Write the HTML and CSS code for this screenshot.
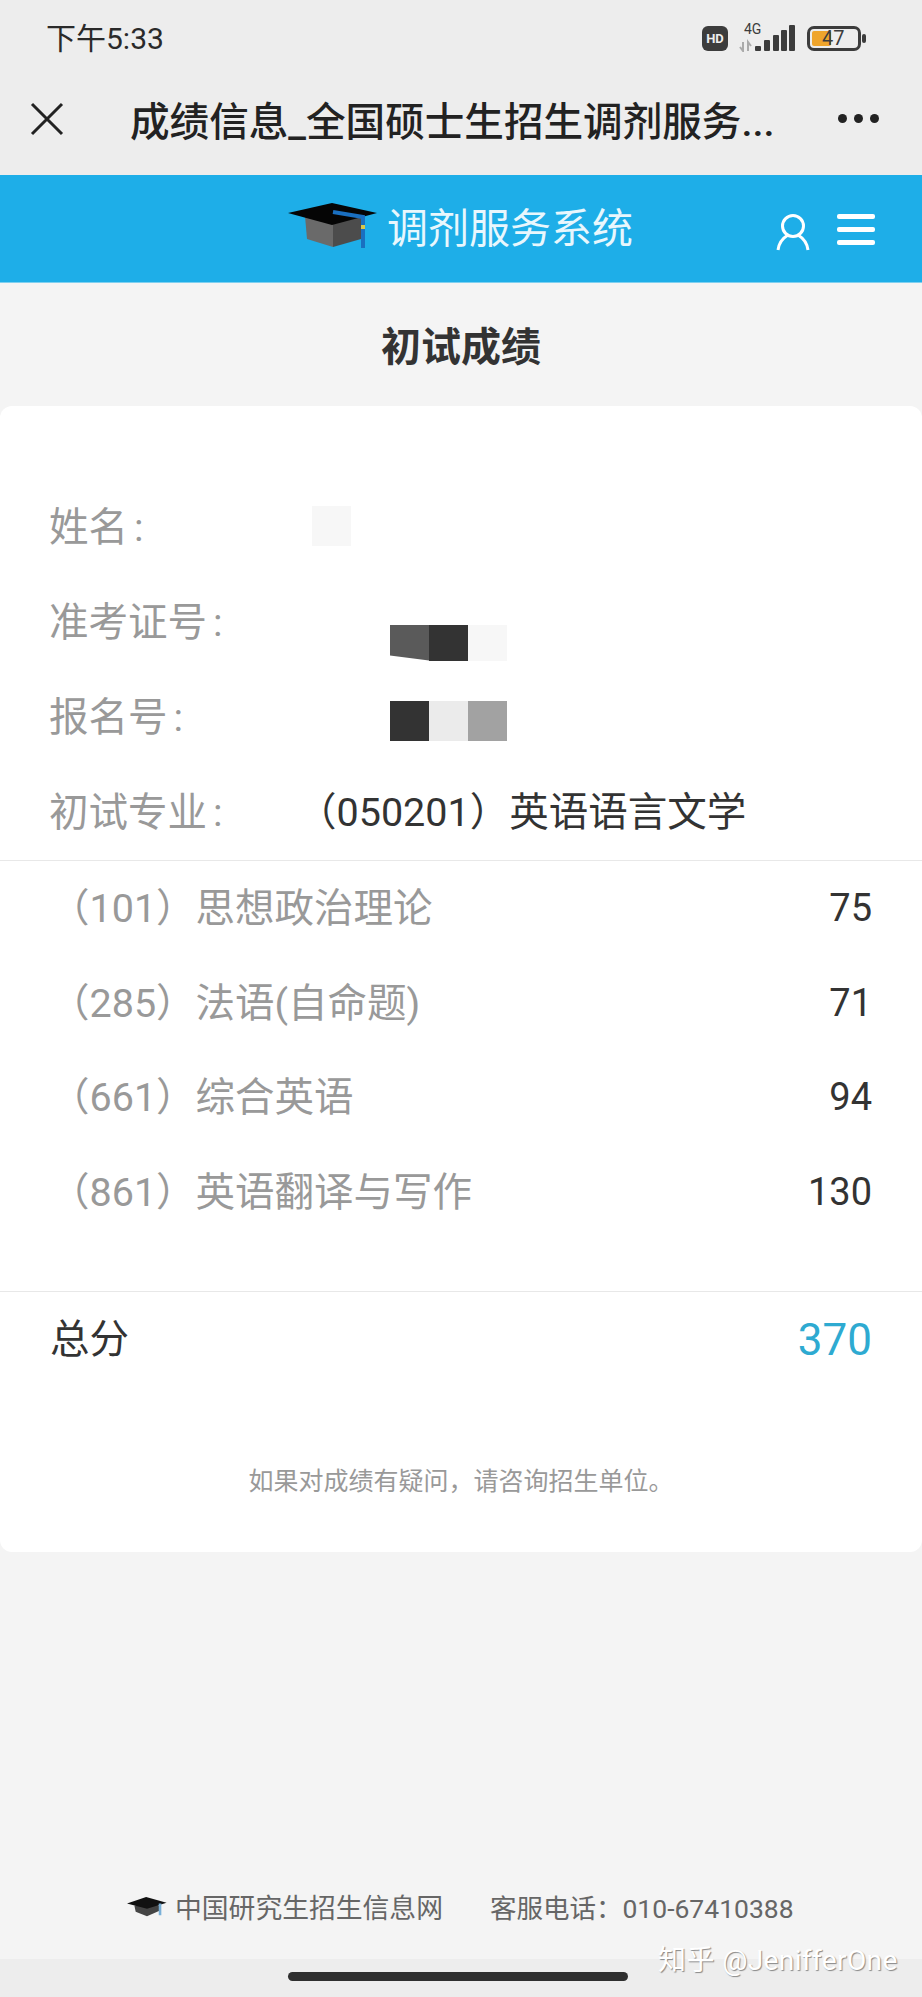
FILE: index.html
```html
<!DOCTYPE html>
<html lang="zh-CN">
<head>
  <meta charset="UTF-8">
  <title>成绩信息</title>
  <link rel="stylesheet" href="styles.css">
</head>
<body>

  <!-- Status bar -->
  <div class="status-bar">
    <span class="clock">下午5:33</span>
    <div class="status-icons">
      <span class="hd">HD</span>
      <svg class="signal" width="57" height="31" viewBox="0 -4 57 31">
        <text x="5" y="9" class="net">4G</text>
        <path d="M4 17v9l-3-4M9 26v-9l3 4" fill="none" stroke="#aaa" stroke-width="2"/>
        <rect x="16" y="21" width="6" height="5" rx="1" fill="#3c3c3c"/>
        <rect x="25" y="15" width="6" height="11" rx="1" fill="#3c3c3c"/>
        <rect x="34" y="10" width="6" height="16" rx="1" fill="#3c3c3c"/>
        <rect x="42" y="5" width="6" height="21" rx="1" fill="#3c3c3c"/>
        <rect x="50" y="0" width="6" height="26" rx="1" fill="#3c3c3c"/>
      </svg>
      <div class="battery">
        <div class="battery-body">
          <div class="battery-fill"></div>
          <span class="battery-num">47</span>
        </div>
        <div class="battery-cap"></div>
      </div>
    </div>
  </div>

  <!-- Browser title bar -->
  <div class="title-bar">
    <svg class="close-icon" width="34" height="34" viewBox="0 0 34 34">
      <path d="M2 2L32 32M32 2L2 32" stroke="#222" stroke-width="3" fill="none"/>
    </svg>
    <div class="page-title">成绩信息_全国硕士生招生调剂服务...</div>
    <div class="more-dots"><i></i><i></i><i></i></div>
  </div>

  <!-- Site header -->
  <div class="site-header">
    <div class="brand">
      <svg class="cap" width="92" height="54" viewBox="0 0 92 54">
        <path d="M18 18L46 18V49L20 41Z" fill="#6a6a6a"/>
        <path d="M46 18L74 18V41L46 49Z" fill="#4c4c4c"/>
        <path d="M1 15L45 5L90 15L45 27Z" fill="#050505"/>
        <path d="M46 14L76 19V50" fill="none" stroke="#1a6fc0" stroke-width="4"/>
        <rect x="74" y="27" width="4" height="4" fill="#d8c84a"/>
      </svg>
      <span class="brand-name">调剂服务系统</span>
    </div>
    <svg class="user-icon" width="34" height="38" viewBox="0 0 34 38">
      <circle cx="17" cy="13" r="10.5" fill="none" stroke="#fff" stroke-width="3"/>
      <path d="M2 37C3 29 7 25 12 22M32 37C31 29 27 25 22 22" fill="none" stroke="#fff" stroke-width="3"/>
    </svg>
    <div class="menu-icon"><i></i><i></i><i></i></div>
  </div>

  <h1 class="heading">初试成绩</h1>

  <!-- Score card -->
  <div class="card">
    <div class="info">
      <div class="info-row">
        <span class="label">姓名<b>:</b></span>
        <div class="mosaic"><i class="c-faint"></i></div>
      </div>
      <div class="info-row">
        <span class="label">准考证号<b>:</b></span>
        <div class="mosaic mosaic-low"><i></i><i></i><i class="c-mid"></i><i class="c-dark"></i><i class="c-faint"></i></div>
      </div>
      <div class="info-row">
        <span class="label">报名号<b>:</b></span>
        <div class="mosaic mosaic-nudge"><i></i><i></i><i class="c-dark"></i><i class="c-light"></i><i class="c-gray"></i></div>
      </div>
      <div class="info-row">
        <span class="label">初试专业<b>:</b></span>
        <span class="value">（050201）英语语言文学</span>
      </div>
    </div>

    <div class="subjects">
      <div class="subject"><span class="subject-name">（101）思想政治理论</span><span class="score">75</span></div>
      <div class="subject"><span class="subject-name">（285）法语(自命题)</span><span class="score">71</span></div>
      <div class="subject"><span class="subject-name">（661）综合英语</span><span class="score">94</span></div>
      <div class="subject"><span class="subject-name">（861）英语翻译与写作</span><span class="score">130</span></div>
    </div>

    <div class="total">
      <span class="total-label">总分</span>
      <span class="total-score">370</span>
    </div>

    <p class="note">如果对成绩有疑问，请咨询招生单位。</p>
  </div>

  <!-- Footer -->
  <div class="footer">
    <svg width="40" height="20" viewBox="0 0 92 46">
      <path d="M17 20L46 12L76 20V31L46 44L20 34Z" fill="#444"/>
      <path d="M0 15L44 0L91 13L46 27Z" fill="#111"/>
      <path d="M76 15V42" fill="none" stroke="#7ab0d8" stroke-width="6"/>
    </svg>
    <span class="footer-site">中国研究生招生信息网</span>
    <span class="footer-phone">客服电话：010-67410388</span>
  </div>

  <div class="nav-bar"><div class="home-pill"></div></div>
  <div class="watermark">知乎 @JenifferOne</div>

</body>
</html>
```

FILE: styles.css
```css
* { box-sizing: border-box; margin: 0; padding: 0; }
body {
  font-family: Roboto, "Noto Sans CJK SC", sans-serif;
  background: #f4f4f4;
  color: #333;
  width: 922px;
  height: 1997px;
  display: flex;
  flex-direction: column;
  position: relative;
  overflow: hidden;
}

/* status bar */
.status-bar {
  height: 76px;
  background: #ededed;
  padding: 0 56px 0 46px;
  display: flex;
  align-items: center;
  justify-content: space-between;
}
.clock { font-size: 30px; color: #2a2a2a; margin-top: -4px; }
.status-icons { display: flex; align-items: center; gap: 11px; }
.signal { margin-bottom: 4px; }
.hd {
  width: 26px;
  height: 25px;
  background: #3c3c3c;
  border-radius: 6px;
  color: #eee;
  font-size: 13px;
  font-weight: 700;
  text-align: center;
  line-height: 25px;
}
.net { font-size: 14px; fill: #3c3c3c; }
.battery { display: flex; align-items: center; gap: 1px; }
.battery-body {
  width: 54px;
  height: 25px;
  border: 3px solid #3c3c3c;
  border-radius: 7px;
  padding: 2px;
  position: relative;
}
.battery-fill { width: 44%; height: 100%; background: #efa52c; border-radius: 2px; }
.battery-num {
  position: absolute;
  left: 12px;
  top: -3px;
  font-size: 20px;
  line-height: 25px;
  color: #3c3c3c;
}
.battery-cap { width: 4px; height: 9px; background: #3c3c3c; border-radius: 2px; }

/* title bar */
.title-bar {
  height: 99px;
  background: #ededed;
  padding: 0 43px 14px 30px;
  display: flex;
  align-items: center;
}
.page-title {
  font-size: 39.6px;
  font-weight: 500;
  color: #222;
  margin-left: 66px;
  flex: 1;
  white-space: nowrap;
}
.more-dots { display: flex; gap: 7px; }
.more-dots i { width: 9px; height: 9px; background: #222; border-radius: 50%; }

/* blue site header */
.site-header {
  height: 108px;
  background: #1eaee8;
  border-bottom: 1px solid #7fd0f0;
  padding: 0 47px 0 287px;
  display: flex;
  align-items: center;
}
.brand { display: flex; align-items: center; gap: 8px; flex: 1; margin-top: -8px; }
.brand-name { font-size: 41px; color: #e8f7fd; }
.user-icon { margin-right: 27px; margin-top: 6px; }
.menu-icon { display: flex; flex-direction: column; gap: 8px; margin-top: 2px; }
.menu-icon i { display: block; width: 38px; height: 5px; background: #fff; border-radius: 2px; }

.heading {
  height: 123px;
  line-height: 130px;
  font-size: 40px;
  font-weight: 700;
  text-align: center;
  color: #333;
}

/* score card */
.card {
  height: 1146px;
  background: #fff;
  border-radius: 12px;
  padding-top: 72px;
  font-size: 39.5px;
}
.info { padding: 0 50px 0 49px; border-bottom: 1px solid #e8e8e8; height: 383px; }
.info-row { height: 95px; display: flex; align-items: center; }
.label { width: 263px; color: #999; margin-bottom: 5px; }
.label b { font-weight: 400; margin-left: 6px; }
.value { color: #333; margin-left: -15px; margin-bottom: 5px; }

.mosaic { display: flex; }
.mosaic i { display: block; width: 39px; height: 40px; }
.mosaic-low { margin-top: 44px; }
.mosaic-low i { height: 36px; }
.mosaic-nudge { margin-top: 11px; }
.c-faint { background: #f7f7f7; }
.c-mid { background: #5a5a5a; clip-path: polygon(0 0, 100% 0, 100% 100%, 0 86%); }
.c-dark { background: #333; }
.c-light { background: #ebebeb; }
.c-gray { background: #a2a2a2; }

.subjects { height: 431px; padding: 0 50px; border-bottom: 1px solid #e8e8e8; }
.subject {
  height: 94.5px;
  display: flex;
  align-items: center;
  justify-content: space-between;
}
.subject-name { color: #999; margin-bottom: 7px; }
.score { font-size: 38px; }

.total {
  display: flex;
  justify-content: space-between;
  align-items: center;
  height: 90px;
  padding: 0 50px;
}
.total-label { margin-bottom: 3px; }
.total-score { font-size: 44px; color: #2eaad1; margin-top: 6px; }
.note {
  margin-top: 79px;
  font-size: 25px;
  color: #999;
  text-align: center;
}

/* footer */
.footer {
  margin-top: 335px;
  padding-left: 127px;
  display: flex;
  align-items: center;
  font-size: 26.8px;
  color: #666;
  gap: 8px;
}
.footer-site { margin-right: 39px; }
.footer-phone { font-size: 26.5px; }

.nav-bar {
  margin-top: auto;
  height: 38px;
  background: #ededed;
  padding: 13px 0 0 288px;
}
.home-pill { width: 340px; height: 9px; background: #2f2f2f; border-radius: 5px; }

.watermark {
  position: absolute;
  left: 658px;
  top: 1938px;
  font-size: 28px;
  letter-spacing: 0.4px;
  color: #fff;
  text-shadow: 1px 1px 1px #888;
}
```
